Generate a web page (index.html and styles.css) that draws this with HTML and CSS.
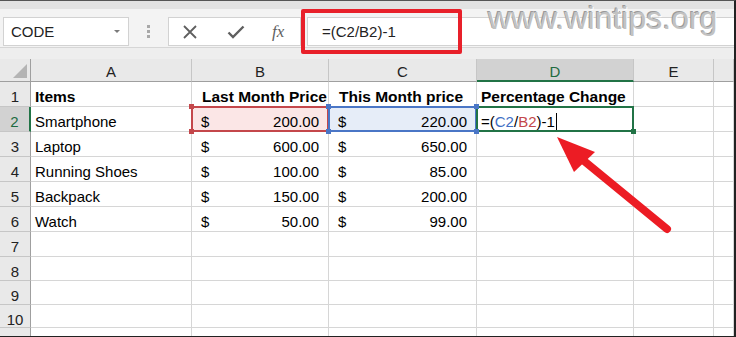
FILE: index.html
```html
<!DOCTYPE html>
<html lang="en">
<head>
    <meta charset="UTF-8">
    <title>Percentage Change</title>
    <link rel="stylesheet" href="styles.css">
</head>
<body>
    <div class="frame">
        <div class="strip"></div>

        <div class="fbar">
            <div class="namebox">
                <span>CODE</span>
                <span class="caret"></span>
            </div>
            <div class="grip"><i></i><i></i><i></i></div>
            <div class="fbtns">
                <svg class="ico" width="16" height="14" viewBox="0 0 16 14">
                    <path d="M2 1 L14 13 M14 1 L2 13" stroke="#5f5f5f" stroke-width="1.8" fill="none"/>
                </svg>
                <svg class="ico" width="18" height="14" viewBox="0 0 18 14">
                    <path d="M1.5 7.5 L6 12 L16.5 1.5" stroke="#5f5f5f" stroke-width="2.4" fill="none"/>
                </svg>
                <span class="fx">fx</span>
            </div>
            <div class="finput">=(C2/B2)-1</div>
        </div>
        <div class="gap"></div>

        <div class="sheet">
            <!-- column headers -->
            <div class="corner"></div>
            <div class="colhead">A</div>
            <div class="colhead">B</div>
            <div class="colhead">C</div>
            <div class="colhead active">D</div>
            <div class="colhead">E</div>
            <div class="colhead"></div>

            <!-- row 1 -->
            <div class="rowhead">1</div>
            <div class="cell bold">Items</div>
            <div class="cell bold hb">Last Month Price</div>
            <div class="cell bold hc">This Month price</div>
            <div class="cell bold">Percentage Change</div>
            <div class="cell"></div>
            <div class="cell"></div>

            <!-- row 2 -->
            <div class="rowhead active">2</div>
            <div class="cell">Smartphone</div>
            <div class="cell money ref-red"><span>$</span><span>200.00</span><i class="dot tl"></i><i class="dot tr"></i><i class="dot bl"></i><i class="dot br"></i></div>
            <div class="cell money ref-blue"><span>$</span><span>220.00</span><i class="dot tl"></i><i class="dot tr"></i><i class="dot bl"></i><i class="dot br"></i></div>
            <div class="cell editing">=(<span class="c-blue">C2</span>/<span class="c-red">B2</span>)-1<span class="cursor"></span><i class="dot br"></i></div>
            <div class="cell"></div>
            <div class="cell"></div>

            <!-- row 3 -->
            <div class="rowhead">3</div>
            <div class="cell">Laptop</div>
            <div class="cell money"><span>$</span><span>600.00</span></div>
            <div class="cell money"><span>$</span><span>650.00</span></div>
            <div class="cell"></div>
            <div class="cell"></div>
            <div class="cell"></div>

            <!-- row 4 -->
            <div class="rowhead">4</div>
            <div class="cell">Running Shoes</div>
            <div class="cell money"><span>$</span><span>100.00</span></div>
            <div class="cell money"><span>$</span><span>85.00</span></div>
            <div class="cell"></div>
            <div class="cell"></div>
            <div class="cell"></div>

            <!-- row 5 -->
            <div class="rowhead">5</div>
            <div class="cell">Backpack</div>
            <div class="cell money"><span>$</span><span>150.00</span></div>
            <div class="cell money"><span>$</span><span>200.00</span></div>
            <div class="cell"></div>
            <div class="cell"></div>
            <div class="cell"></div>

            <!-- row 6 -->
            <div class="rowhead">6</div>
            <div class="cell">Watch</div>
            <div class="cell money"><span>$</span><span>50.00</span></div>
            <div class="cell money"><span>$</span><span>99.00</span></div>
            <div class="cell"></div>
            <div class="cell"></div>
            <div class="cell"></div>

            <!-- empty rows -->
            <div class="rowhead">7</div>
            <div class="cell"></div><div class="cell"></div><div class="cell"></div><div class="cell"></div><div class="cell"></div><div class="cell"></div>
            <div class="rowhead">8</div>
            <div class="cell"></div><div class="cell"></div><div class="cell"></div><div class="cell"></div><div class="cell"></div><div class="cell"></div>
            <div class="rowhead">9</div>
            <div class="cell"></div><div class="cell"></div><div class="cell"></div><div class="cell"></div><div class="cell"></div><div class="cell"></div>
            <div class="rowhead">10</div>
            <div class="cell"></div><div class="cell"></div><div class="cell"></div><div class="cell"></div><div class="cell"></div><div class="cell"></div>
            <div class="rowhead"></div>
            <div class="cell"></div><div class="cell"></div><div class="cell"></div><div class="cell"></div><div class="cell"></div><div class="cell"></div>
        </div>

        <!-- annotations drawn over the screenshot -->
        <div class="highlight"></div>
        <div class="watermark">www.wintips.org</div>
        <svg class="arrow" width="736" height="337" viewBox="0 0 736 337">
            <line x1="667" y1="228" x2="578" y2="155" stroke="#ec1c24" stroke-width="8" stroke-linecap="round"/>
            <polygon points="557,136 595,151 574,171" fill="#ec1c24"/>
        </svg>
    </div>
</body>
</html>
```

FILE: styles.css
```css
* {
    box-sizing: border-box;
}

body {
    margin: 0;
    font-family: "Liberation Sans", Arial, sans-serif;
    background: #fff;
}

.frame {
    position: relative;
    width: 736px;
    height: 337px;
    overflow: hidden;
    border-top: 1px solid #555;
    border-right: 2px solid #222;
    border-bottom: 1px solid #222;
    background: #fff;
}

.strip {
    height: 8px;
    background: #e2e2e2;
}

/* formula bar */
.fbar {
    height: 39px;
    display: flex;
    align-items: flex-end;
    padding: 0 0 1px 3px;
    background: #f3f3f3;
    border-bottom: 1px solid #d6d6d6;
}

.namebox {
    width: 126px;
    height: 29px;
    display: flex;
    align-items: center;
    justify-content: space-between;
    padding: 0 8px 0 7px;
    background: #fff;
    border: 1px solid #d2d2d2;
    font-size: 15px;
    color: #222;
}

.caret {
    width: 0;
    height: 0;
    border-left: 3px solid transparent;
    border-right: 3px solid transparent;
    border-top: 3px solid #7a7a7a;
}

.grip {
    width: 39px;
    height: 29px;
    display: flex;
    flex-direction: column;
    align-items: center;
    justify-content: center;
    gap: 2px;
}

.grip i {
    width: 3px;
    height: 3px;
    background: #a8a8a8;
}

.fbtns {
    width: 133px;
    height: 29px;
    display: flex;
    align-items: center;
    gap: 29px;
    padding-left: 13px;
    background: #fff;
    border: 1px solid #d2d2d2;
}

.fx {
    font-family: "Liberation Serif", serif;
    font-style: italic;
    font-size: 17px;
    color: #5f5f5f;
    margin-left: -2px;
}

.finput {
    flex: 1;
    height: 29px;
    margin-left: 6px;
    padding: 5px 0 0 14px;
    background: #fff;
    border: 1px solid #d2d2d2;
    border-right: none;
    font-size: 15px;
    color: #222;
}

.gap {
    height: 11px;
    background: #eeeeee;
}

/* sheet grid */
.sheet {
    display: grid;
    grid-template-columns: 31px 161px 137px 148px 157px 80px 20px;
    grid-template-rows: 23px 25px 25px 25px 25px 25px 25px 25px 24px 24px 23px 20px;
    font-size: 15px;
}

.corner {
    position: relative;
    background: #e9e9e9;
    border-right: 1px solid #9f9f9f;
    border-bottom: 1px solid #9f9f9f;
}

.corner::after {
    content: "";
    position: absolute;
    right: 3px;
    bottom: 3px;
    border-left: 14px solid transparent;
    border-bottom: 14px solid #b4b4b4;
}

.colhead {
    background: #e9e9e9;
    border-right: 1px solid #c6c6c6;
    border-bottom: 1px solid #9f9f9f;
    text-align: center;
    padding-top: 3px;
    line-height: 20px;
    color: #222;
}

.colhead.active {
    background: #d2d2d2;
    color: #1d6b3f;
    border-bottom: 2px solid #217346;
}

.rowhead {
    background: #e9e9e9;
    border-right: 1px solid #9f9f9f;
    border-bottom: 1px solid #c6c6c6;
    text-align: center;
    padding-top: 5px;
    line-height: 20px;
    color: #222;
}

.rowhead.active {
    background: #d2d2d2;
    color: #1d6b3f;
    border-right: 2px solid #217346;
}

.cell {
    position: relative;
    border-right: 1px solid #d6d6d6;
    border-bottom: 1px solid #d6d6d6;
    padding: 5px 0 0 4px;
    line-height: 20px;
    white-space: nowrap;
    color: #000;
}

.bold {
    font-weight: bold;
    font-size: 15.5px;
}

.hb,
.hc {
    padding-left: 10px;
}

.money {
    display: flex;
    justify-content: space-between;
    padding: 5px 9px 0 9px;
}

/* reference colouring while editing the formula */
.ref-red {
    background: #fbe6e6;
}

.ref-red::after,
.ref-blue::after,
.editing::after {
    content: "";
    position: absolute;
    top: -1px;
    left: -1px;
    right: -1px;
    bottom: -1px;
    border: 2px solid #c4474b;
    pointer-events: none;
}

.ref-blue {
    background: #e6edf8;
}

.ref-blue::after {
    border-color: #4a76c6;
}

.editing::after {
    border-color: #217346;
}

.dot {
    position: absolute;
    width: 5px;
    height: 5px;
    background: #c4474b;
    z-index: 2;
}

.ref-blue .dot {
    background: #4a76c6;
}

.editing .dot {
    background: #217346;
}

.dot.tl { top: -3px; left: -3px; }
.dot.tr { top: -3px; right: -3px; }
.dot.bl { bottom: -3px; left: -3px; }
.dot.br { bottom: -3px; right: -3px; }

.c-blue {
    color: #3f6fc4;
}

.c-red {
    color: #c4474b;
}

.cursor {
    display: inline-block;
    width: 1px;
    height: 17px;
    margin-left: 1px;
    vertical-align: -3px;
    background: #000;
}

/* overlays */
.highlight {
    position: absolute;
    left: 301px;
    top: 8px;
    width: 161px;
    height: 45px;
    border: 4px solid #e8202a;
    border-radius: 2px;
}

.watermark {
    position: absolute;
    left: 488px;
    top: 0;
    font-size: 32px;
    line-height: 34px;
    color: #c2c2c2;
    text-shadow: 1px 1px 0 #fff, -1px -1px 0 #9a9a9a;
}

.arrow {
    position: absolute;
    left: 0;
    top: 0;
}
```
